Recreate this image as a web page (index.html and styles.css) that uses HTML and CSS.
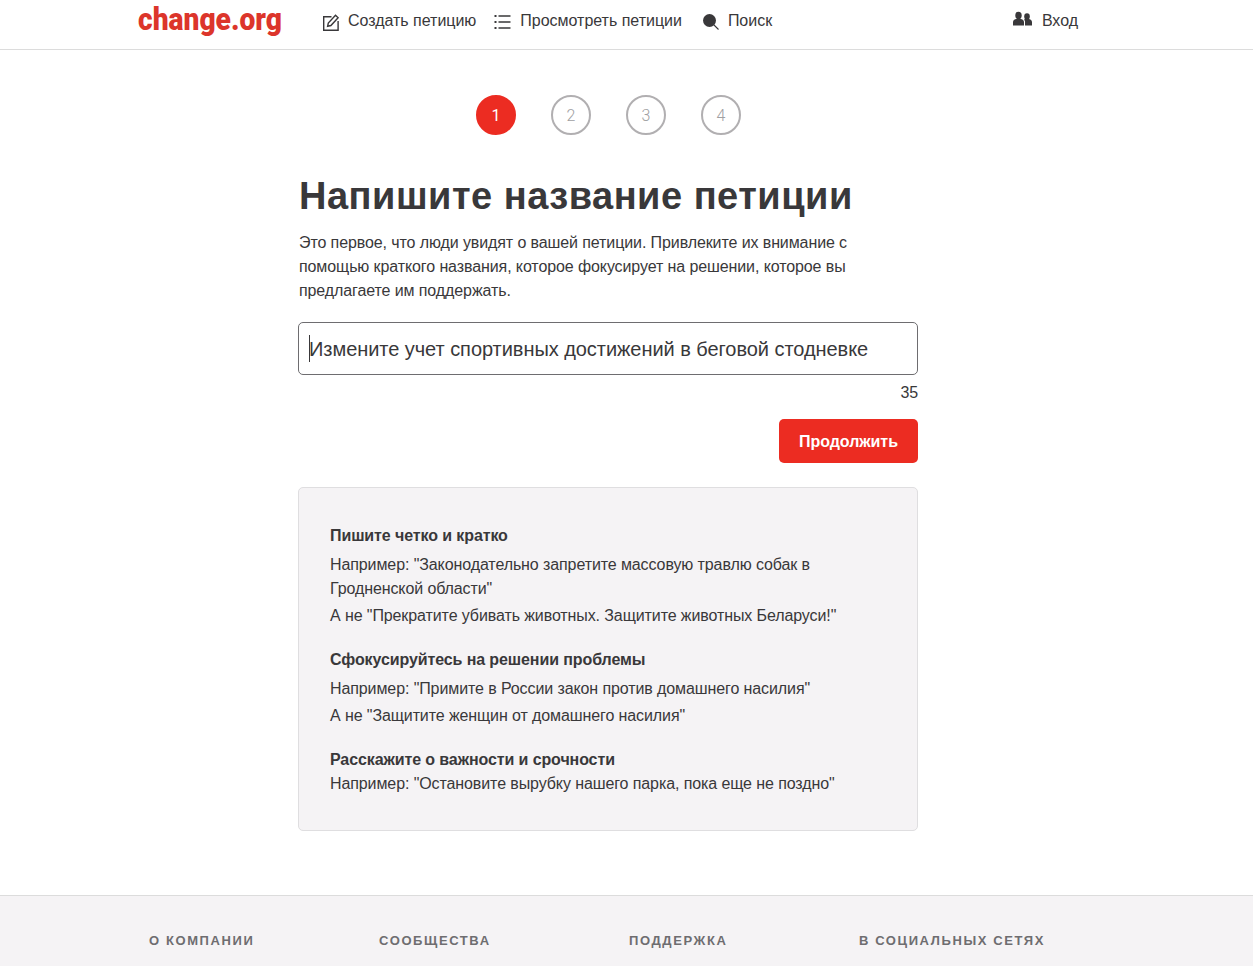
FILE: index.html
```html
<!DOCTYPE html>
<html lang="ru">
<head>
  <meta charset="UTF-8">
  <meta name="viewport" content="width=device-width, initial-scale=1.0">
  <title>Напишите название петиции</title>
  <link rel="stylesheet" href="styles.css">
</head>
<body>
  <header class="topbar">
    <a class="logo" href="#"><span class="logo-text">change.org</span></a>
    <nav class="nav">
      <a class="nav-item" href="#">
        <svg class="icon" width="18" height="20" viewBox="0 0 18 20" fill="none" stroke="#39383a" stroke-width="1.4">
          <path d="M9.500 5.700H1.700v13.600h14.400V10"/>
          <path d="M5.600 15.300l.7-3.300 7.200-7.700 2.600 2.500-7.200 7.700z"/>
        </svg>
        Создать петицию
      </a>
      <a class="nav-item" href="#">
        <svg class="icon" width="18" height="20" viewBox="0 0 18 20" fill="none" stroke="#39383a" stroke-width="1.300">
          <path d="M4.500 5h12M4.500 11h12M4.500 17h12"/>
          <path d="M.500 5h2M.500 11h2M.500 17h2" stroke-width="2" stroke-dasharray="2 4"/>
        </svg>
        Просмотреть петиции
      </a>
      <a class="nav-item nav-search" href="#">
        <svg class="icon" width="18" height="20" viewBox="0 0 18 20" fill="#39383a" stroke="#39383a">
          <circle cx="7.500" cy="9.500" r="6.500" stroke="none"/>
          <path d="M11.500 13.500l5 5" stroke-width="1.100"/>
        </svg>
        Поиск
      </a>
    </nav>
    <a class="nav-item login" href="#">
      <svg class="icon" width="19" height="20" viewBox="0 0 19 20" fill="#39383a">
        <ellipse cx="5.500" cy="4.500" rx="3.200" ry="3.700"/>
        <path d="M0 14.500V11c0-2 2-2.600 3.500-3.200h4C9 8.400 11 9 11 11v3.500z"/>
        <ellipse cx="14" cy="5.500" rx="2.800" ry="3.200"/>
        <path d="M12 14.500V10.600c0-1-.6-1.700-1-2.200l1.700-.6h2.800C17 8.400 19 9 19 11v3.500z"/>
      </svg>
      Вход
    </a>
  </header>

  <main class="content">
    <div class="steps">
      <span class="step step-active">1</span>
      <span class="step">2</span>
      <span class="step">3</span>
      <span class="step">4</span>
    </div>

    <h1 class="title">Напишите название петиции</h1>
    <p class="intro">Это первое, что люди увидят о вашей петиции. Привлеките их внимание с помощью краткого названия, которое фокусирует на решении, которое вы предлагаете им поддержать.</p>

    <div class="field">
      <span class="caret"></span>
      <span class="field-text">Измените учет спортивных достижений в беговой стодневке</span>
    </div>
    <div class="counter">35</div>
    <div class="actions">
      <button class="btn" type="button">Продолжить</button>
    </div>

    <section class="tips">
      <h3 class="tip-title">Пишите четко и кратко</h3>
      <p class="tip-line">Например: "Законодательно запретите массовую травлю собак в Гродненской области"</p>
      <p class="tip-line">А не "Прекратите убивать животных. Защитите животных Беларуси!"</p>
      <h3 class="tip-title">Сфокусируйтесь на решении проблемы</h3>
      <p class="tip-line">Например: "Примите в России закон против домашнего насилия"</p>
      <p class="tip-line">А не "Защитите женщин от домашнего насилия"</p>
      <h3 class="tip-title">Расскажите о важности и срочности</h3>
      <p class="tip-last">Например: "Остановите вырубку нашего парка, пока еще не поздно"</p>
    </section>
  </main>

  <footer class="footer">
    <div class="footer-col">О компании</div>
    <div class="footer-col">Сообщества</div>
    <div class="footer-col">Поддержка</div>
    <div class="footer-col">В социальных сетях</div>
  </footer>
</body>
</html>
```

FILE: styles.css
```css
html, body {
  margin: 0;
  padding: 0;
}

body {
  font-family: "Liberation Sans", Arial, sans-serif;
  font-size: 16px;
  line-height: 24px;
  color: #39383a;
  background-color: #fff;
  overflow: hidden;
  height: 966px;
}

a {
  color: inherit;
  text-decoration: none;
}

.topbar {
  display: flex;
  align-items: center;
  height: 49px;
  padding: 0 175px 0 138px;
  border-bottom: 1px solid #dcdcdc;
}

.logo {
  width: 184px;
  margin-top: -11px;
  font-family: Roboto, sans-serif;
  font-weight: 900;
  font-size: 32px;
  color: #dc352b;
}

.logo-text {
  display: inline-block;
  transform: scaleX(.88);
  transform-origin: left center;
}

.nav {
  display: flex;
  gap: 18px;
  flex: 1;
}

.nav-item {
  display: flex;
  align-items: center;
  gap: 8px;
  margin-top: -8px;
  letter-spacing: -0.02px;
}

.nav-search {
  margin-left: 2px;
}

.login {
  gap: 10px;
}

.content {
  width: 620px;
  height: 845px;
  margin-left: 298px;
  letter-spacing: -0.1px;
}

.steps {
  display: flex;
  justify-content: center;
  gap: 35px;
  padding-top: 45px;
}

.step {
  display: flex;
  align-items: center;
  justify-content: center;
  box-sizing: border-box;
  width: 40px;
  height: 40px;
  padding: 1px 0 0 1px;
  border: 2px solid #b1afb1;
  border-radius: 50%;
  font-family: Roboto, sans-serif;
  font-weight: 300;
  color: #a0a0a2;
}

.step-active {
  background-color: #ec2c22;
  border-color: #ec2c22;
  font-weight: 400;
  color: #fff;
}

.title {
  margin: 38px 0 0 1px;
  font-size: 38px;
  line-height: 46px;
  letter-spacing: 0.5px;
  font-weight: 700;
}

.intro {
  margin: 12px 0 0;
  padding-left: 1px;
  width: 565px;
}

.field {
  display: flex;
  align-items: center;
  height: 51px;
  margin-top: 19px;
  padding-left: 10px;
  border: 1px solid #6e6d70;
  border-radius: 5px;
  font-size: 20px;
  letter-spacing: -0.05px;
}

.caret {
  width: 1px;
  height: 27px;
  margin-right: -1px;
  background-color: #39383a;
}

.counter {
  margin-top: 6px;
  text-align: right;
}

.actions {
  display: flex;
  justify-content: flex-end;
  margin-top: 14px;
}

.btn {
  width: 139px;
  height: 44px;
  padding: 1px 0 0;
  border: none;
  border-radius: 5px;
  background-color: #ec2c22;
  color: #fff;
  font-family: inherit;
  font-size: 16px;
  font-weight: 700;
  letter-spacing: -0.05px;
  cursor: pointer;
}

.tips {
  margin-top: 24px;
  padding: 20px 31px 23px;
  height: 299px;
  background-color: #f5f3f5;
  border: 1px solid #dfdee0;
  border-radius: 5px;
}

.tip-title {
  margin: 16px 0 0;
  font-size: 16px;
  line-height: 24px;
  font-weight: 700;
}

.tip-line + .tip-title {
  margin-top: 20px;
}

.tip-line {
  margin: 5px 0 0;
}

.tip-line + .tip-line {
  margin-top: 3px;
}

.tip-last {
  margin: 0;
}

.footer {
  display: grid;
  grid-template-columns: 230px 250px 230px 1fr;
  height: 71px;
  padding: 33px 0 0 149px;
  box-sizing: border-box;
  background-color: #f5f3f5;
  border-top: 1px solid #dcdcdc;
}

.footer-col {
  font-size: 13px;
  font-weight: 700;
  letter-spacing: 1.6px;
  text-transform: uppercase;
  color: #6e6d70;
}
```
